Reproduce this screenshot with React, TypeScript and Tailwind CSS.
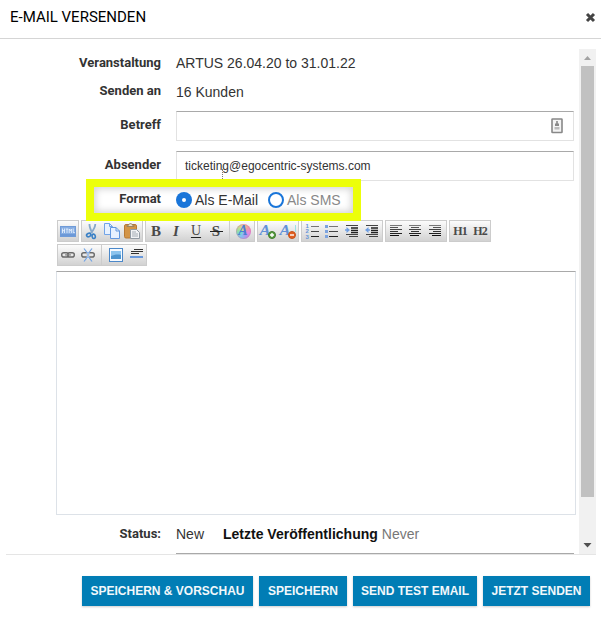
import type { ReactNode } from "react";

const arial = "font-['Liberation_Sans',Arial,sans-serif]";
const roboto = "font-['Roboto',sans-serif]";

function Icon({ children }: { children: ReactNode }) {
  return (
    <svg className="h-5 w-5 shrink-0" viewBox="0 0 20 20" fill="none">
      {children}
    </svg>
  );
}

function Group({ children }: { children: ReactNode }) {
  return (
    <div className="flex h-[22px] items-center border border-[#cccccc] bg-linear-to-b from-[#fcfcfc] to-[#d2d2d2]">
      {children}
    </div>
  );
}

function Separator() {
  return <div className="mx-[3px] h-5 w-px bg-[#cccccc]" />;
}

function Glyph({ text, className = "" }: { text: string; className?: string }) {
  return (
    <span className={`flex h-5 w-5 items-center justify-center font-['Liberation_Serif',serif] leading-none text-[#4a4a4a] ${className}`}>
      {text}
    </span>
  );
}

const lineShades = ["#777", "#555", "#444", "#333", "#222", "#111"];

function Lines({ rows }: { rows: [number, number][] }) {
  return (
    <Icon>
      {rows.map(([x, w], i) => (
        <rect key={i} x={x} y={4 + i * 2} width={w} height="1" fill={lineShades[i]} />
      ))}
    </Icon>
  );
}

function HtmlIcon() {
  return (
    <Icon>
      <rect x="2.5" y="5.5" width="15" height="10" fill="#86ade2" stroke="#6f9bd8" />
      <path d="M3 13h14v2H3z" fill="#6c99d8" />
      <path d="M4.500 7.500v4.500M6.500 7.500v4.500M4.500 9.700h2M7.700 8h2.600M9 8v4M11.200 12V8l1.100 1.700L13.400 8v4M15.200 7.500v4h1.600" stroke="#e9f2ff" strokeWidth=".85" />
    </Icon>
  );
}

function CutIcon() {
  return (
    <Icon>
      <path d="M7.500 3c-.3 3 1 5.500 2.800 9M13.300 3c0 3.500-1.800 6-4.300 9" stroke="#86a8cb" strokeWidth="1.800" />
      <ellipse cx="6.700" cy="14" rx="2.200" ry="1.700" transform="rotate(-25 6.700 14)" stroke="#3a80c6" strokeWidth="1.600" />
      <ellipse cx="11.700" cy="15.300" rx="1.600" ry="2.200" transform="rotate(-12 11.700 15.300)" stroke="#3a80c6" strokeWidth="1.600" />
    </Icon>
  );
}

function CopyIcon() {
  return (
    <Icon>
      <path d="M2.500 2.500h5l3 3v8h-8z" fill="#e7f1ff" stroke="#72a4e7" />
      <path d="M7.500 2.500v3h3" stroke="#72a4e7" />
      <path d="M8.500 6.500h5.500l3.500 3.500v7.500h-9z" fill="#e7f1ff" stroke="#6297df" />
      <path d="M14 6.500v3.500h3.500" stroke="#6297df" />
    </Icon>
  );
}

function PasteIcon() {
  return (
    <Icon>
      <rect x="2.500" y="3.500" width="12" height="13.500" rx="1.500" fill="#d39548" stroke="#b87a35" />
      <path d="M5 5.500V4.300h1.500c.3-2.300 3.700-2.300 4 0H12v1.200z" fill="#e8dccb" stroke="#8d7557" strokeWidth=".8" />
      <path d="M8.500 8.500h6l3 3v6h-9z" fill="#f1f3f5" stroke="#929ba4" />
      <path d="M10 11h4M10 13h6M10 15h6" stroke="#a3abb3" />
    </Icon>
  );
}

function ColorWheelIcon() {
  return (
    <span className="flex h-5 w-5 items-center justify-center">
      <span className="flex h-[15px] w-[15px] items-center justify-center rounded-full bg-[conic-gradient(#f2c795,#f09aa6,#e58ae0,#ac97ee,#82c4f2,#7fdfb9,#bde18c,#f2c795)] font-['Liberation_Serif',serif] text-[14px] leading-none font-bold text-[#4a7fd2] italic ring-1 ring-[#d56fa8]/40 ring-inset">
        A
      </span>
    </span>
  );
}

function FontSizeIcon({ minus }: { minus?: boolean }) {
  return (
    <span className="relative flex h-5 w-5 justify-center pt-[2px] font-['Liberation_Serif',serif] text-[15px] leading-none font-bold text-[#6292d8] italic">
      <span className="-ml-[5px] scale-x-110">A</span>
      {minus && <span className="absolute top-[4px] right-[2px] h-[7px] w-px bg-[#9be3e3]" />}
      <svg className="absolute right-[2px] bottom-[2px] h-2 w-2" viewBox="0 0 8 8">
        <circle cx="4" cy="4" r="3.500" fill={minus ? "#e26021" : "#5a9d42"} stroke={minus ? "#c4521c" : "#3e7d2c"} />
        <path d={minus ? "M2 4h4" : "M2 4h4M4 2v4"} stroke="#fff" strokeWidth="1.400" />
      </svg>
    </span>
  );
}

function ListIcon({ numbered }: { numbered?: boolean }) {
  return (
    <Icon>
      {[5.5, 10.5, 15.5].map((y, i) => (
        <g key={y}>
          <path d={numbered ? `M9 ${y}h8` : `M7 ${y}h9`} stroke={["#777", "#444", "#222"][i]} />
          {!numbered && <rect x="3" y={y - 1.5} width="3" height="3" fill="#7da4df" />}
        </g>
      ))}
      {numbered && (
        <g fill="#6594d8" fontFamily="Liberation Sans" fontWeight="bold" fontSize="6">
          <text x="3.500" y="7">1</text>
          <text x="3.500" y="12.300">2</text>
          <text x="3.500" y="17.500">3</text>
        </g>
      )}
    </Icon>
  );
}

function IndentIcon({ out }: { out?: boolean }) {
  return (
    <Icon>
      <path d="M4 4.500h12M4 13.500h12M7 15.500h9" stroke="#444" />
      <path d="M9 7h7M9 9.300h7M9 11.500h7" stroke="#222" strokeWidth="1.300" />
      <path d={out ? "M6.500 6v6L3 9z" : "M4.500 6v6L8 9z"} fill="#6e9ee2" />
      <path d={out ? "M6 9h2" : "M3 9h2"} stroke="#6e9ee2" strokeWidth="1.600" />
    </Icon>
  );
}

function LinkIcon({ broken }: { broken?: boolean }) {
  return (
    <Icon>
      <rect x="3.700" y="7.700" width="6.800" height="4.300" rx="2.100" stroke="#6a6a6a" strokeWidth="1.400" />
      <rect x="9.500" y="7.700" width="6.800" height="4.300" rx="2.100" stroke="#6a6a6a" strokeWidth="1.400" />
      {!broken && <path d="M7 9.900h6" stroke="#888" strokeWidth="1.200" />}
      {broken && (
        <>
          <path d="M10 6.500v7" stroke="#eee" strokeWidth="2.500" />
          <path d="M6 3.500l3 4M14 3.500l-3 4M6 16.500l3-4M14 16.500l-3-4M10 7v6" stroke="#6fa2e4" strokeWidth="1.200" />
        </>
      )}
    </Icon>
  );
}

function ImageIcon() {
  return (
    <Icon>
      <rect x="3.500" y="3.500" width="13" height="13" fill="#f6faff" stroke="#4b88c9" />
      <rect x="5" y="6" width="10" height="8" fill="#8bc4ee" />
      <path d="M5 11c3-1 6-2 10-1v4H5z" fill="#4c94ce" />
    </Icon>
  );
}

function RuleIcon() {
  return (
    <Icon>
      <path d="M8 4.500h9M5 6.500h12M5 8.500h8" stroke="#333" />
      <path d="M4 12h13" stroke="#6999dc" strokeWidth="2" />
    </Icon>
  );
}

function Toolbar() {
  return (
    <div className="ml-[57px] flex flex-col gap-[2px]">
      <div className="flex gap-[2px]">
        <Group><HtmlIcon /></Group>
        <Group><CutIcon /><CopyIcon /><PasteIcon /></Group>
        <Group>
          <Glyph text="B" className="text-[15px] font-bold" />
          <Glyph text="I" className="text-[15px] font-bold italic" />
          <Glyph text="U" className="text-[14px] underline decoration-[#222] decoration-1 underline-offset-2" />
          <span className="relative">
            <Glyph text="S" className="text-[15px] font-bold" />
            <span className="absolute top-[10px] left-[4px] h-px w-[13px] bg-[#222]" />
          </span>
          <Separator />
          <ColorWheelIcon />
          <span className="w-px" />
        </Group>
        <Group><FontSizeIcon /><FontSizeIcon minus /></Group>
        <Group><ListIcon numbered /><ListIcon /><IndentIcon /><IndentIcon out /></Group>
        <Group>
          <Lines rows={[[4, 12], [4, 8], [4, 12], [4, 8], [4, 12], [4, 9]]} />
          <Lines rows={[[3, 12], [5, 8], [3, 12], [5, 8], [3, 12], [4, 9]]} />
          <Lines rows={[[3, 12], [7, 8], [3, 12], [7, 8], [3, 12], [6, 9]]} />
        </Group>
        <Group>
          <Glyph text="H1" className="text-[12px] font-bold tracking-[-0.8px]" />
          <Glyph text="H2" className="text-[12px] font-bold tracking-[-0.8px]" />
        </Group>
      </div>
      <div className="flex">
        <Group>
          <LinkIcon />
          <LinkIcon broken />
          <Separator />
          <span className="w-px" />
          <ImageIcon />
          <RuleIcon />
        </Group>
      </div>
    </div>
  );
}

function Label({ children }: { children: ReactNode }) {
  return (
    <div className={`w-[161px] shrink-0 text-right text-[13px] leading-4 font-bold text-[#333] ${roboto}`}>
      {children}
    </div>
  );
}

const field = "h-[30px] w-[398px] border border-[#e2e2e2] border-t-[#a9a9a9] bg-white";

function Action({ children, width }: { children: ReactNode; width: string }) {
  return (
    <button className={`flex h-[30px] items-center justify-center bg-[#017db5] text-[12px] font-bold whitespace-nowrap text-[#f2f8fb] shadow-[0_1px_2px_rgba(0,0,0,0.2)] ${width}`}>
      {children}
    </button>
  );
}

export default function App() {
  return (
    <div className={`flex h-[621px] w-[601px] flex-col overflow-hidden bg-white text-[14px] text-[#333] ${arial}`}>
      <header className="flex h-[39px] shrink-0 items-start justify-between border-b border-[#d5d5d5] pt-[8px] pr-[5px] pl-[10px]">
        <h1 className={`text-[15px] leading-[18px] text-black ${roboto}`}>E-MAIL VERSENDEN</h1>
        <svg className="mt-[4px] h-[11px] w-[11px]" viewBox="0 0 11 11">
          <path d="M2 2l7 7M9 2L2 9" stroke="#444" strokeWidth="3" />
        </svg>
      </header>

      <div className="mt-[10px] flex h-[505px] shrink-0">
        <main className="h-[505px] w-[579px] shrink-0 overflow-hidden">
          <div className="flex h-[29px] gap-[15px] pt-[6px]">
            <Label>Veranstaltung</Label>
            <div className="leading-4">ARTUS 26.04.20 to 31.01.22</div>
          </div>
          <div className="flex h-[33px] gap-[15px] pt-[5px]">
            <Label>Senden an</Label>
            <div className="pt-px leading-4">16 Kunden</div>
          </div>
          <div className="flex h-10 gap-[15px]">
            <div className="pt-[6px]"><Label>Betreff</Label></div>
            <div className={`flex items-center justify-end pr-[10px] ${field}`}>
              <svg className="h-4 w-3" viewBox="0 0 12 16">
                <rect x="1" y="1" width="10" height="13.500" rx=".5" fill="#f4f4f4" stroke="#888" strokeWidth="1.600" />
                <path d="M5.200 3h1.600v2.500H8V8H4V5.500h1.200z" fill="#888" />
                <path d="M3.500 9h5v2.500h-5z" fill="#bbb" />
              </svg>
            </div>
          </div>
          <div className="flex h-[30px] gap-[15px]">
            <div className="pt-[6px]"><Label>Absender</Label></div>
            <div className={`flex items-center pl-[8px] text-[12px] ${field}`}>ticketing@egocentric-systems.com</div>
          </div>
          <div className="relative h-[39px]">
            <div className="absolute -top-[2px] left-[86px] h-[42px] w-[275px] border-8 border-[#ecff0a] bg-white shadow-[inset_0_0_7px_2px_#d4d4d4]" />
            <div className="absolute -top-[12px] left-[222px] h-[10px] border-l border-dotted border-[#777]" />
            <div className="relative flex h-9 items-center gap-[15px]">
              <Label>Format</Label>
              <div className="flex items-center pt-px">
                <span className="flex h-4 w-4 items-center justify-center rounded-full bg-[#1975d9]">
                  <span className="h-1 w-1 rounded-full bg-white" />
                </span>
                <span className="ml-[3px] w-[73px] pt-px">Als E-Mail</span>
                <span className="h-4 w-4 rounded-full border-2 border-[#1975d9] bg-white" />
                <span className="ml-[3px] pt-px text-[#888]">Als SMS</span>
              </div>
            </div>
          </div>
          <div className="relative z-10 h-[51px]">
            <Toolbar />
            <div className="absolute top-0 left-[86px] h-px w-[275px] bg-[#ecff0a]" />
          </div>
          <div className="ml-[56px] h-[244px] w-[520px] border border-[#dde2e8] border-t-[#a9a9a9]" />
          <div className="flex h-[38px] items-start gap-[15px] pt-[11px]">
            <Label>Status:</Label>
            <div className="flex leading-4">
              <span className="w-[47px]">New</span>
              <span className="font-bold text-[#111]">Letzte Veröffentlichung</span>
              <span className="ml-1 text-[#777]">Never</span>
            </div>
          </div>
          <div className="ml-[176px] h-px w-[398px] bg-[#a9a9a9]" />
        </main>
        <aside className="flex h-[505px] w-[17px] flex-col items-center bg-[#f1f1f1]">
          <svg className="h-[17px] w-[17px] shrink-0" viewBox="0 0 17 17"><path d="M5 11l3.500-4 3.500 4z" fill="#a3a3a3" /></svg>
          <div className="h-[431px] w-[13px] bg-[#c1c1c1]" />
          <svg className="mt-auto h-[17px] w-[17px] shrink-0" viewBox="0 0 17 17"><path d="M4.500 6h8L8.500 10.500z" fill="#505050" /></svg>
        </aside>
      </div>
      <div className="ml-[6px] h-px w-[590px] shrink-0 bg-[#e5e5e5]" />
      <footer className="flex gap-[6px] pt-[21px] pl-[82px]">
        <Action width="w-[171px]">SPEICHERN &amp; VORSCHAU</Action>
        <Action width="w-[88px]">SPEICHERN</Action>
        <Action width="w-[124px]">SEND TEST EMAIL</Action>
        <Action width="w-[107px]">JETZT SENDEN</Action>
      </footer>
    </div>
  );
}
